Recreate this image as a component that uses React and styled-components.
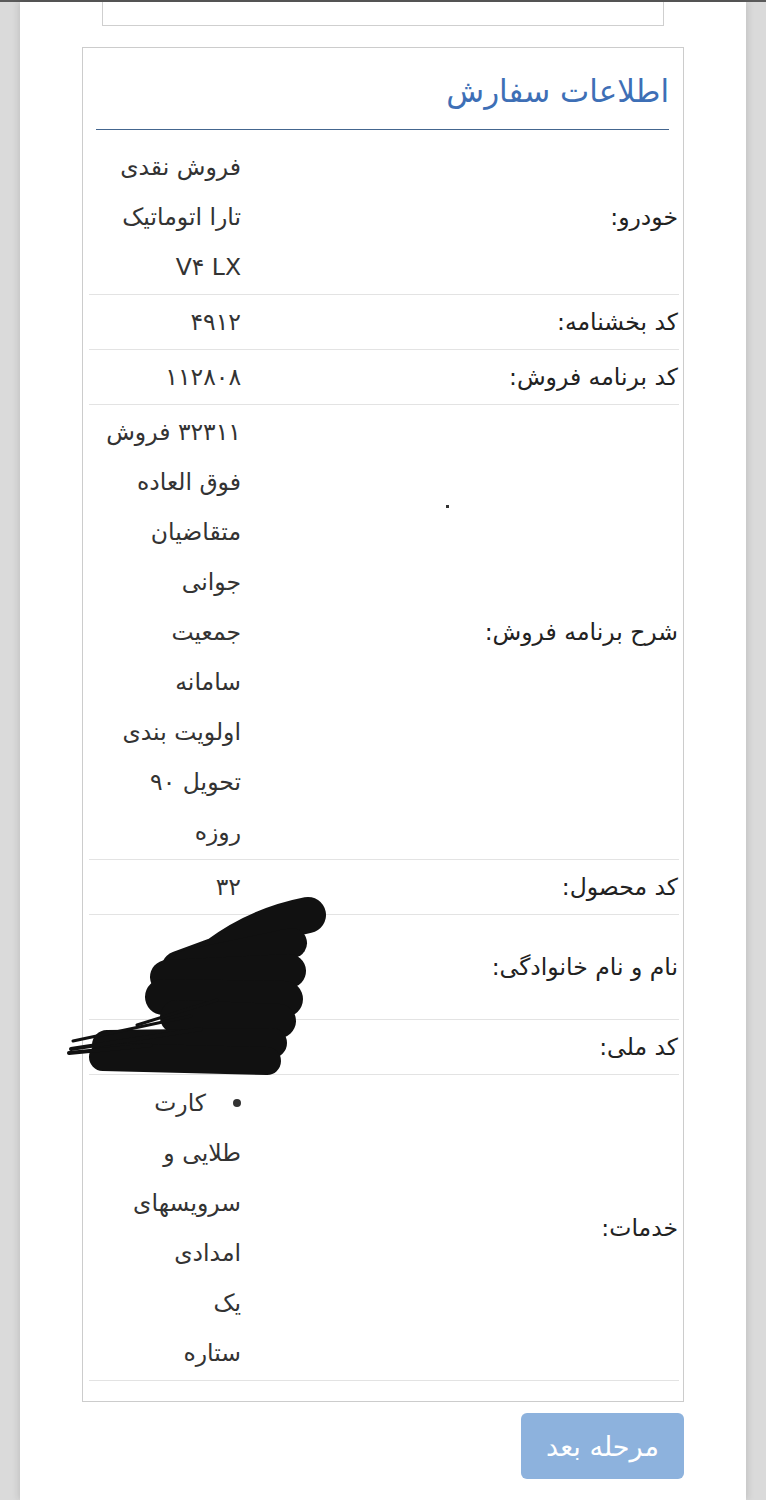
import React from "react";
import styled, { createGlobalStyle } from "styled-components";

const GlobalStyle = createGlobalStyle`
  html, body {
    margin: 0;
    padding: 0;
    background: #dadada;
  }
  body {
    font-family: "DejaVu Sans", "Noto Sans", sans-serif;
    color: #222;
  }
`;

const Screen = styled.div`
  min-height: 1500px;
  border-top: 2px solid #5a5a5a;
  box-sizing: border-box;
  padding: 0 20px;
`;

const Sheet = styled.div`
  background: #fff;
  min-height: 1498px;
  box-shadow: -3px 0 6px rgba(0, 0, 0, 0.08), 3px 0 6px rgba(0, 0, 0, 0.08);
  display: flex;
  flex-direction: column;
  direction: rtl;
`;

const TopBox = styled.div`
  height: 23px;
  margin: 0 82px;
  border: 1px solid #cfcfcf;
  border-top: none;
`;

const Card = styled.section`
  position: relative;
  margin: 21px 62px 0 62px;
  border: 1px solid #cccccc;
  padding: 0 4px 20px 6px;
`;

const Heading = styled.h2`
  margin: 19px 10px 0 7px;
  padding: 0 0 14px 0;
  font-weight: normal;
  font-size: 31px;
  line-height: 48px;
  color: #3e6fb6;
  border-bottom: 1px solid #44668f;
`;

const Table = styled.div`
  margin-top: 10px;
`;

const Row = styled.div`
  display: grid;
  grid-template-columns: 230px 1fr 160px;
  padding: 2px 0;
  border-bottom: 1px solid #e3e3e3;
  font-size: 23.5px;
  line-height: 50px;
`;

const Label = styled.div`
  align-self: center;
  padding-right: 1px;
  white-space: nowrap;
`;

const Middle = styled.div`
  text-align: left;
`;

const Dot = styled.span`
  display: block;
  width: 3px;
  height: 3px;
  margin-top: 98px;
  background: #333;
`;

const Value = styled.div`
  padding: 0 8px 0 4px;
  color: #333;
  white-space: nowrap;
`;

const Line = styled.div`
  height: 50px;
`;

const List = styled.ul`
  margin: 0;
  padding: 0;
  list-style: disc inside;
`;

const Item = styled.li`
  &::marker {
    font-size: 26px;
  }
`;

const Scribble = styled.svg`
  position: absolute;
  left: -16px;
  top: 847px;
  width: 260px;
  height: 180px;
  pointer-events: none;
`;

const Footer = styled.div`
  display: flex;
  margin: 11px 62px 0 62px;
`;

const NextButton = styled.button`
  width: 163px;
  height: 66px;
  border: none;
  border-radius: 6px;
  background: #8db2dd;
  color: #fff;
  font-family: "DejaVu Sans", sans-serif;
  font-size: 27px;
  cursor: not-allowed;
`;

const rows = [
  { label: "خودرو:", lines: ["فروش نقدی", "تارا اتوماتیک", "V۴ LX"] },
  { label: "کد بخشنامه:", lines: ["۴۹۱۲"] },
  { label: "کد برنامه فروش:", lines: ["۱۱۲۸۰۸"] },
  {
    label: "شرح برنامه فروش:",
    dot: true,
    lines: [
      "۳۲۳۱۱ فروش",
      "فوق العاده",
      "متقاضیان",
      "جوانی",
      "جمعیت",
      "سامانه",
      "اولویت بندی",
      "تحویل ۹۰",
      "روزه",
    ],
  },
  { label: "کد محصول:", lines: ["۳۲"] },
  { label: "نام و نام خانوادگی:", lines: ["", ""] },
  { label: "کد ملی:", lines: [""] },
];

const services = ["کارت", "طلایی و", "سرویسهای", "امدادی", "یک", "ستاره"];

const App = () => {
  return (
    <Screen>
      <GlobalStyle />
      <Sheet>
        <TopBox />
        <Card>
          <Heading>اطلاعات سفارش</Heading>
          <Table>
            {rows.map((r) => (
              <Row key={r.label}>
                <Label>{r.label}</Label>
                <Middle>{r.dot && <Dot />}</Middle>
                <Value>
                  {r.lines.map((l, i) => (
                    <Line key={i}>{l}</Line>
                  ))}
                </Value>
              </Row>
            ))}
            <Row>
              <Label>خدمات:</Label>
              <Middle />
              <Value>
                <List>
                  <Item>
                    {services.map((s, i) => (
                      <React.Fragment key={i}>
                        {i > 0 && <br />}
                        {s}
                      </React.Fragment>
                    ))}
                  </Item>
                </List>
              </Value>
            </Row>
          </Table>
          <Scribble viewBox="0 0 260 180">
            <g stroke="#111" strokeLinecap="round" fill="none">
              <path d="M241 20 Q190 30 150 60 L112 74" strokeWidth="36" />
              <path d="M225 48 L120 70" strokeWidth="30" />
              <path d="M100 82 L222 76" strokeWidth="34" />
              <path d="M96 102 L218 104" strokeWidth="36" />
              <path d="M110 122 L212 126" strokeWidth="34" />
              <path d="M40 150 L205 148" strokeWidth="30" />
              <path d="M36 162 L200 166" strokeWidth="28" />
              <path d="M4 154 L134 134" strokeWidth="4" />
              <path d="M6 146 L124 121" strokeWidth="3" />
              <path d="M2 158 L84 150" strokeWidth="4" />
              <path d="M70 130 L150 105" strokeWidth="3" />
            </g>
          </Scribble>
        </Card>
        <Footer>
          <NextButton disabled>مرحله بعد</NextButton>
        </Footer>
      </Sheet>
    </Screen>
  );
};

export default App;
